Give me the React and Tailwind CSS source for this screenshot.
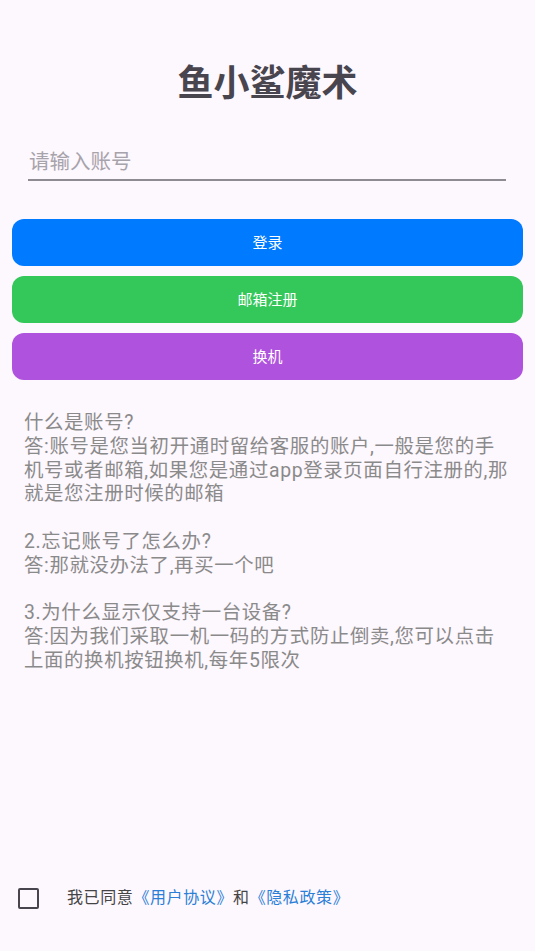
import React, { useState } from "react";

const faq = [
  [
    "什么是账号?",
    "答:账号是您当初开通时留给客服的账户,一般是您的手",
    "机号或者邮箱,如果您是通过app登录页面自行注册的,那",
    "就是您注册时候的邮箱",
  ],
  ["2.忘记账号了怎么办?", "答:那就没办法了,再买一个吧"],
  [
    "3.为什么显示仅支持一台设备?",
    "答:因为我们采取一机一码的方式防止倒卖,您可以点击",
    "上面的换机按钮换机,每年5限次",
  ],
];

export default function App() {
  const [account, setAccount] = useState("");
  const [agreed, setAgreed] = useState(false);

  return (
    <div
      className="min-h-[951px] w-full flex flex-col bg-[#fdf7fe]"
      style={{ fontFamily: 'Roboto, "Noto Sans CJK SC", sans-serif' }}
    >
      <div className="mt-[62px] h-[44px] flex items-center justify-center">
        <h1 className="text-[36px] font-bold leading-none text-[#48454e]">
          鱼小鲨魔术
        </h1>
      </div>

      <div className="mt-[35px] mx-[29px] ml-[28px]">
        <input
          value={account}
          onChange={(e) => setAccount(e.target.value)}
          placeholder="请输入账号"
          className="w-full h-[40px] pt-[3px] px-[1px] text-[20.5px] text-[#333] placeholder:text-[#a7a3ab] bg-transparent border-b-2 border-[#8f8b93] outline-none"
        />
      </div>

      <div className="mt-[38px] mx-[12px] flex flex-col gap-[10px]">
        <button className="h-[47px] pt-[1px] rounded-[12px] bg-[#007aff] text-white text-[15px]">
          登录
        </button>
        <button className="h-[47px] pt-[1px] rounded-[12px] bg-[#34c759] text-white text-[15px]">
          邮箱注册
        </button>
        <button className="h-[47px] pt-[1px] rounded-[12px] bg-[#af52de] text-white text-[15px]">
          换机
        </button>
      </div>

      <div className="mt-[31px] px-[24px] flex flex-col gap-[23.8px] text-[19.4px] tracking-[0.65px] leading-[23.8px] text-[#8a8a8a]">
        {faq.map((block, i) => (
          <div key={i}>
            {block.map((line, j) => (
              <p key={j} className="whitespace-nowrap">
                {line}
              </p>
            ))}
          </div>
        ))}
      </div>

      <div className="mt-auto mb-[33px] h-[40px] flex items-center">
        <button
          onClick={() => setAgreed(!agreed)}
          className="ml-[18px] w-[21px] h-[21px] rounded-[2px] border-2 border-[#48454e] flex items-center justify-center"
        >
          {agreed && <span className="w-[11px] h-[11px] bg-[#48454e]" />}
        </button>
        <p className="ml-[28px] text-[16px] tracking-[0.6px] text-[#444]">
          我已同意<span className="text-[#2b7fd6]">《用户协议》</span>和
          <span className="text-[#2b7fd6]">《隐私政策》</span>
        </p>
      </div>
    </div>
  );
}
